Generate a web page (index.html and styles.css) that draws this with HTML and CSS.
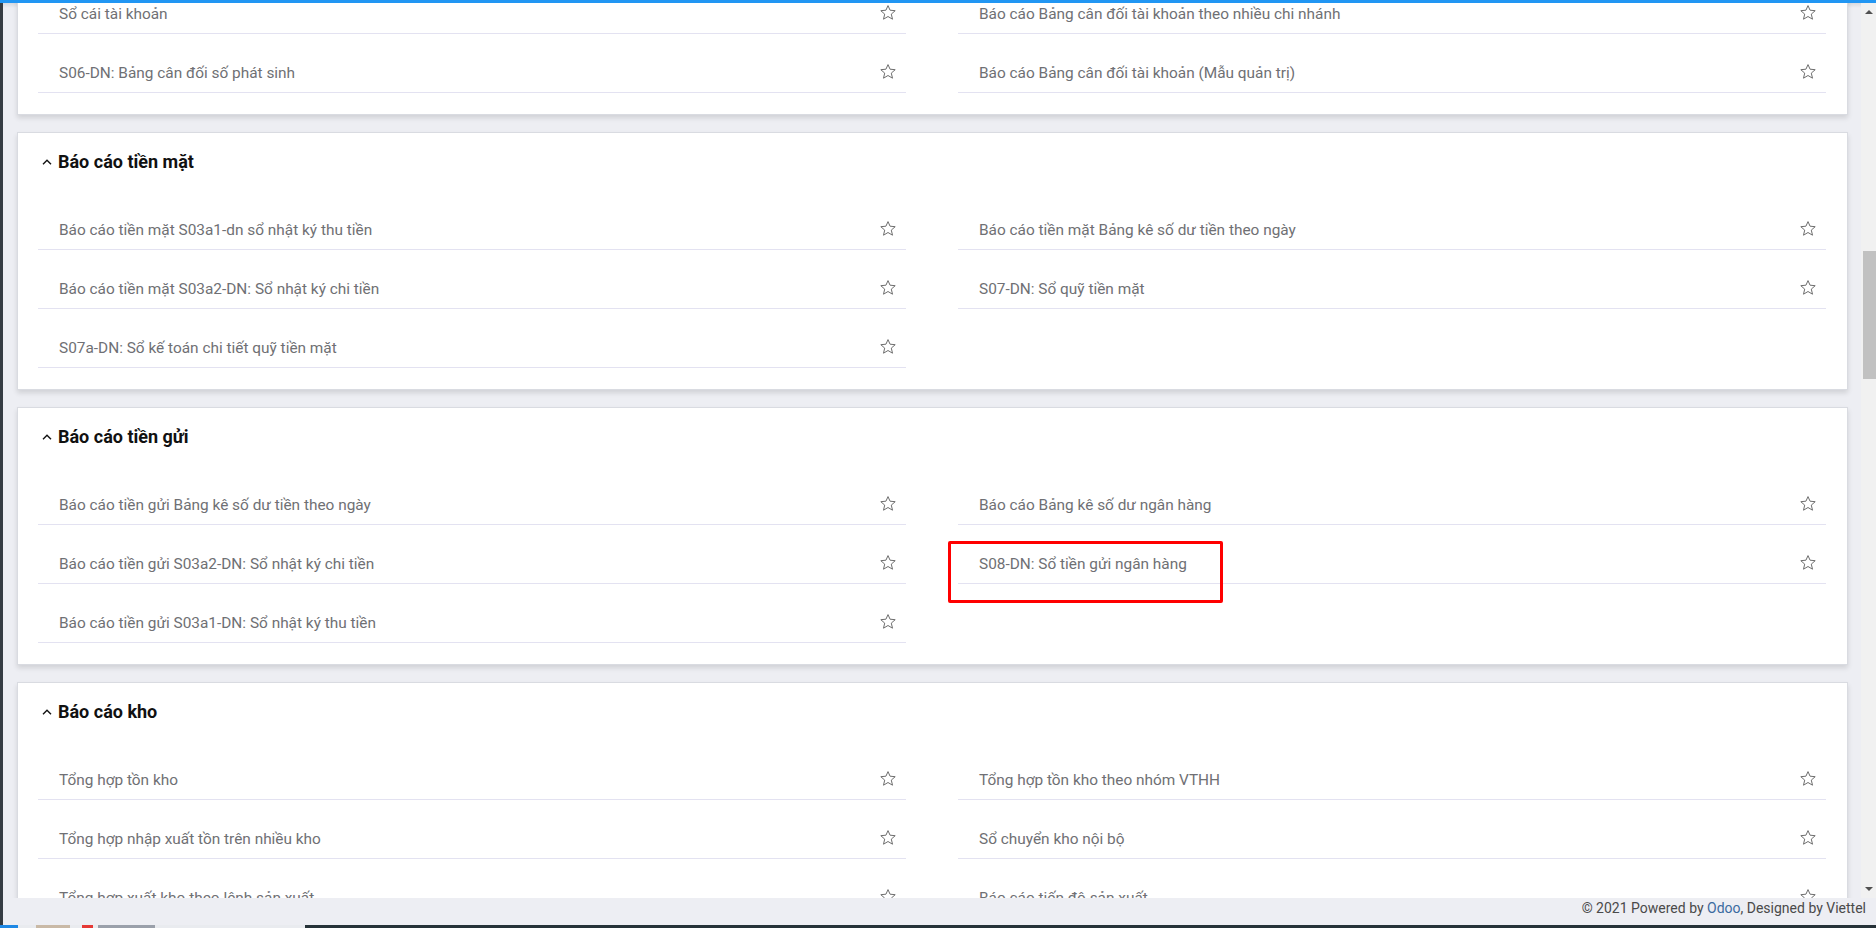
FILE: index.html
```html
<!DOCTYPE html>
<html lang="vi">
<head>
<meta charset="utf-8">
<title>Báo cáo</title>
<link rel="stylesheet" href="styles.css">
</head>
<body>
<div class="topbar"></div>
<div class="frame">
  <div class="edge"></div>
  <div class="workspace">
    <div class="viewport">
      <div class="scroller">
        <div class="groups">

          <section class="card">
            <div class="card-head"><svg class="chev" viewBox="0 0 10 6"><path d="M1 5.2 L5 1.3 L9 5.2" /></svg><span>Báo cáo tổng hợp</span></div>
            <div class="items">
              <div class="item"><span>Sổ nhật ký chung</span><svg class="star" viewBox="0 0 16 15"><polygon points="8,0.6 10.06,5.2 15.2,5.7 11.3,9.1 12.5,14.2 8,11.5 3.5,14.2 4.7,9.1 0.8,5.7 5.94,5.2"/></svg></div>
              <div class="item"><span>Báo cáo Bảng cân đối tài khoản</span><svg class="star" viewBox="0 0 16 15"><polygon points="8,0.6 10.06,5.2 15.2,5.7 11.3,9.1 12.5,14.2 8,11.5 3.5,14.2 4.7,9.1 0.8,5.7 5.94,5.2"/></svg></div>
              <div class="item"><span>Sổ cái tài khoản</span><svg class="star" viewBox="0 0 16 15"><polygon points="8,0.6 10.06,5.2 15.2,5.7 11.3,9.1 12.5,14.2 8,11.5 3.5,14.2 4.7,9.1 0.8,5.7 5.94,5.2"/></svg></div>
              <div class="item"><span>Báo cáo Bảng cân đối tài khoản theo nhiều chi nhánh</span><svg class="star" viewBox="0 0 16 15"><polygon points="8,0.6 10.06,5.2 15.2,5.7 11.3,9.1 12.5,14.2 8,11.5 3.5,14.2 4.7,9.1 0.8,5.7 5.94,5.2"/></svg></div>
              <div class="item"><span>S06-DN: Bảng cân đối số phát sinh</span><svg class="star" viewBox="0 0 16 15"><polygon points="8,0.6 10.06,5.2 15.2,5.7 11.3,9.1 12.5,14.2 8,11.5 3.5,14.2 4.7,9.1 0.8,5.7 5.94,5.2"/></svg></div>
              <div class="item"><span>Báo cáo Bảng cân đối tài khoản (Mẫu quản trị)</span><svg class="star" viewBox="0 0 16 15"><polygon points="8,0.6 10.06,5.2 15.2,5.7 11.3,9.1 12.5,14.2 8,11.5 3.5,14.2 4.7,9.1 0.8,5.7 5.94,5.2"/></svg></div>
            </div>
          </section>

          <section class="card">
            <div class="card-head"><svg class="chev" viewBox="0 0 10 6"><path d="M1 5.2 L5 1.3 L9 5.2" /></svg><span>Báo cáo tiền mặt</span></div>
            <div class="items">
              <div class="item"><span>Báo cáo tiền mặt S03a1-dn sổ nhật ký thu tiền</span><svg class="star" viewBox="0 0 16 15"><polygon points="8,0.6 10.06,5.2 15.2,5.7 11.3,9.1 12.5,14.2 8,11.5 3.5,14.2 4.7,9.1 0.8,5.7 5.94,5.2"/></svg></div>
              <div class="item"><span>Báo cáo tiền mặt Bảng kê số dư tiền theo ngày</span><svg class="star" viewBox="0 0 16 15"><polygon points="8,0.6 10.06,5.2 15.2,5.7 11.3,9.1 12.5,14.2 8,11.5 3.5,14.2 4.7,9.1 0.8,5.7 5.94,5.2"/></svg></div>
              <div class="item"><span>Báo cáo tiền mặt S03a2-DN: Sổ nhật ký chi tiền</span><svg class="star" viewBox="0 0 16 15"><polygon points="8,0.6 10.06,5.2 15.2,5.7 11.3,9.1 12.5,14.2 8,11.5 3.5,14.2 4.7,9.1 0.8,5.7 5.94,5.2"/></svg></div>
              <div class="item"><span>S07-DN: Sổ quỹ tiền mặt</span><svg class="star" viewBox="0 0 16 15"><polygon points="8,0.6 10.06,5.2 15.2,5.7 11.3,9.1 12.5,14.2 8,11.5 3.5,14.2 4.7,9.1 0.8,5.7 5.94,5.2"/></svg></div>
              <div class="item"><span>S07a-DN: Sổ kế toán chi tiết quỹ tiền mặt</span><svg class="star" viewBox="0 0 16 15"><polygon points="8,0.6 10.06,5.2 15.2,5.7 11.3,9.1 12.5,14.2 8,11.5 3.5,14.2 4.7,9.1 0.8,5.7 5.94,5.2"/></svg></div>
            </div>
          </section>

          <section class="card">
            <div class="card-head"><svg class="chev" viewBox="0 0 10 6"><path d="M1 5.2 L5 1.3 L9 5.2" /></svg><span>Báo cáo tiền gửi</span></div>
            <div class="items">
              <div class="item"><span>Báo cáo tiền gửi Bảng kê số dư tiền theo ngày</span><svg class="star" viewBox="0 0 16 15"><polygon points="8,0.6 10.06,5.2 15.2,5.7 11.3,9.1 12.5,14.2 8,11.5 3.5,14.2 4.7,9.1 0.8,5.7 5.94,5.2"/></svg></div>
              <div class="item"><span>Báo cáo Bảng kê số dư ngân hàng</span><svg class="star" viewBox="0 0 16 15"><polygon points="8,0.6 10.06,5.2 15.2,5.7 11.3,9.1 12.5,14.2 8,11.5 3.5,14.2 4.7,9.1 0.8,5.7 5.94,5.2"/></svg></div>
              <div class="item"><span>Báo cáo tiền gửi S03a2-DN: Sổ nhật ký chi tiền</span><svg class="star" viewBox="0 0 16 15"><polygon points="8,0.6 10.06,5.2 15.2,5.7 11.3,9.1 12.5,14.2 8,11.5 3.5,14.2 4.7,9.1 0.8,5.7 5.94,5.2"/></svg></div>
              <div class="item"><span>S08-DN: Sổ tiền gửi ngân hàng</span><svg class="star" viewBox="0 0 16 15"><polygon points="8,0.6 10.06,5.2 15.2,5.7 11.3,9.1 12.5,14.2 8,11.5 3.5,14.2 4.7,9.1 0.8,5.7 5.94,5.2"/></svg><div class="highlight"></div></div>
              <div class="item"><span>Báo cáo tiền gửi S03a1-DN: Sổ nhật ký thu tiền</span><svg class="star" viewBox="0 0 16 15"><polygon points="8,0.6 10.06,5.2 15.2,5.7 11.3,9.1 12.5,14.2 8,11.5 3.5,14.2 4.7,9.1 0.8,5.7 5.94,5.2"/></svg></div>
            </div>
          </section>

          <section class="card">
            <div class="card-head"><svg class="chev" viewBox="0 0 10 6"><path d="M1 5.2 L5 1.3 L9 5.2" /></svg><span>Báo cáo kho</span></div>
            <div class="items">
              <div class="item"><span>Tổng hợp tồn kho</span><svg class="star" viewBox="0 0 16 15"><polygon points="8,0.6 10.06,5.2 15.2,5.7 11.3,9.1 12.5,14.2 8,11.5 3.5,14.2 4.7,9.1 0.8,5.7 5.94,5.2"/></svg></div>
              <div class="item"><span>Tổng hợp tồn kho theo nhóm VTHH</span><svg class="star" viewBox="0 0 16 15"><polygon points="8,0.6 10.06,5.2 15.2,5.7 11.3,9.1 12.5,14.2 8,11.5 3.5,14.2 4.7,9.1 0.8,5.7 5.94,5.2"/></svg></div>
              <div class="item"><span>Tổng hợp nhập xuất tồn trên nhiều kho</span><svg class="star" viewBox="0 0 16 15"><polygon points="8,0.6 10.06,5.2 15.2,5.7 11.3,9.1 12.5,14.2 8,11.5 3.5,14.2 4.7,9.1 0.8,5.7 5.94,5.2"/></svg></div>
              <div class="item"><span>Sổ chuyển kho nội bộ</span><svg class="star" viewBox="0 0 16 15"><polygon points="8,0.6 10.06,5.2 15.2,5.7 11.3,9.1 12.5,14.2 8,11.5 3.5,14.2 4.7,9.1 0.8,5.7 5.94,5.2"/></svg></div>
              <div class="item"><span>Tổng hợp xuất kho theo lệnh sản xuất</span><svg class="star" viewBox="0 0 16 15"><polygon points="8,0.6 10.06,5.2 15.2,5.7 11.3,9.1 12.5,14.2 8,11.5 3.5,14.2 4.7,9.1 0.8,5.7 5.94,5.2"/></svg></div>
              <div class="item"><span>Báo cáo tiến độ sản xuất</span><svg class="star" viewBox="0 0 16 15"><polygon points="8,0.6 10.06,5.2 15.2,5.7 11.3,9.1 12.5,14.2 8,11.5 3.5,14.2 4.7,9.1 0.8,5.7 5.94,5.2"/></svg></div>
            </div>
          </section>

        </div>
      </div>
      <div class="scrollbar">
        <div class="sb-btn"><span class="arrow-up"></span></div>
        <div class="sb-track"><div class="sb-thumb"></div></div>
        <div class="sb-btn"><span class="arrow-down"></span></div>
      </div>
    </div>
    <footer class="footer">© 2021 Powered by&nbsp;<a href="#">Odoo</a>, Designed by Viettel</footer>
  </div>
</div>
<div class="taskbar">
  <span class="tb tb-blue"></span>
  <span class="tb tb-light1"></span>
  <span class="tb tb-icon"></span>
  <span class="tb tb-light2"></span>
  <span class="tb tb-red"></span>
  <span class="tb tb-light3"></span>
  <span class="tb tb-text"></span>
  <span class="tb tb-light4"></span>
  <span class="tb tb-dark"></span>
</div>
</body>
</html>
```

FILE: styles.css
```css
html, body {
  margin: 0;
  padding: 0;
  height: 928px;
  overflow: hidden;
  background: #edeef3;
  font-family: Roboto, "Noto Sans", "Liberation Sans", sans-serif;
}

.topbar {
  height: 3px;
  background: #2196f3;
}

.frame {
  display: flex;
  height: 922px;
}

.edge {
  width: 3px;
  flex: none;
  background: #353c43;
}

.workspace {
  flex: 1;
  min-width: 0;
  display: flex;
  flex-direction: column;
}

.viewport {
  height: 895px;
  display: flex;
}

.scroller {
  flex: 1;
  min-width: 0;
  overflow: hidden;
  padding: 0 13px 0 14px;
  background: linear-gradient(#d8dadf 0, #edeef3 5px);
}

.groups {
  margin-top: -146px;
  display: flex;
  flex-direction: column;
  gap: 17px;
}

.card {
  background: #fff;
  border: 1px solid #d9dbe1;
  box-shadow: 0 3px 5px rgba(0, 0, 0, 0.12);
  padding: 16px 21px 21px 20px;
}

.card-head {
  display: flex;
  align-items: center;
  height: 24px;
  padding-left: 4px;
  gap: 6px;
  font-size: 18px;
  font-weight: 700;
  color: #111;
}

.chev {
  width: 10px;
  height: 6px;
  margin-top: 2px;
  fill: none;
  stroke: #111;
  stroke-width: 1.4;
}

.items {
  margin-top: 18px;
  display: grid;
  grid-template-columns: 1fr 1fr;
  column-gap: 52px;
}

.item {
  position: relative;
  margin-top: 20px;
  height: 39px;
  box-sizing: border-box;
  border-bottom: 1px solid #e3e2f1;
  display: flex;
  align-items: center;
  justify-content: space-between;
  padding: 0 10px 0 21px;
  font-size: 15.4px;
  color: #6f7074;
  white-space: nowrap;
}

.star {
  width: 16px;
  height: 15px;
  margin-bottom: 3px;
  flex: none;
  fill: none;
  stroke: #6d6d6d;
  stroke-width: 1;
  stroke-linejoin: round;
}

.highlight {
  position: absolute;
  left: -10px;
  top: -4px;
  width: 275px;
  height: 62px;
  box-sizing: border-box;
  border: 3px solid #ff0000;
  border-radius: 2px;
}

.scrollbar {
  width: 15px;
  flex: none;
  background: #f1f1f1;
  display: flex;
  flex-direction: column;
}

.sb-btn {
  height: 18px;
  flex: none;
  display: flex;
  align-items: center;
  justify-content: center;
}

.arrow-up {
  width: 0;
  height: 0;
  border-left: 4px solid transparent;
  border-right: 4px solid transparent;
  border-bottom: 4px solid #505050;
}

.arrow-down {
  width: 0;
  height: 0;
  border-left: 4px solid transparent;
  border-right: 4px solid transparent;
  border-top: 4px solid #505050;
}

.sb-track {
  flex: 1;
}

.sb-thumb {
  margin: 230px 0 0 2px;
  height: 128px;
  background: #c1c1c1;
}

.footer {
  height: 27px;
  display: flex;
  justify-content: flex-end;
  padding-right: 10px;
  font-size: 14px;
  line-height: 20px;
  color: #4a4a4a;
}

.footer a {
  color: #3b6aa0;
  text-decoration: none;
}

.taskbar {
  display: flex;
  height: 3px;
}

.tb { display: block; height: 3px; }
.tb-blue { width: 18px; background: #1e88e5; }
.tb-light1 { width: 18px; background: #e9ebef; }
.tb-icon { width: 34px; background: #c9b9a6; }
.tb-light2 { width: 12px; background: #e9ebef; }
.tb-red { width: 11px; background: #e53935; }
.tb-light3 { width: 5px; background: #e9ebef; }
.tb-text { width: 57px; background: #9aa0aa; }
.tb-light4 { width: 150px; background: #e9ebef; }
.tb-dark { flex: 1; background: #263238; }
```
